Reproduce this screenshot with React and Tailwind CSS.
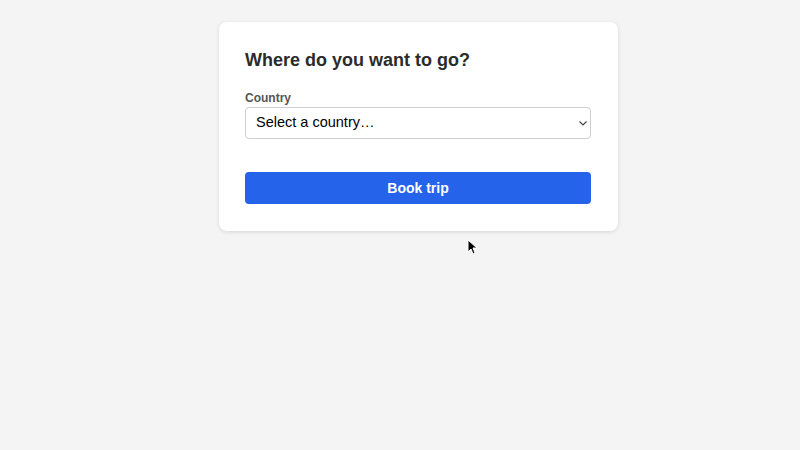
export default function App() {
  return (
    <div className="relative h-[450px] w-[800px] overflow-hidden bg-[#f4f4f4]" style={{ fontFamily: '"Liberation Sans", Arial, sans-serif' }}>
      <div className="ml-[219px] mt-[22px] w-[399px] rounded-lg bg-white pb-[27px] pl-[26px] pr-[27px] pt-[26px] shadow-[0_1px_4px_rgba(0,0,0,0.12)]">
        <h1 className="text-[18px] font-bold leading-[24px] text-[#2b2b2b]">Where do you want to go?</h1>

        <label className="mt-[19px] block text-[12px] font-semibold leading-[14px] text-[#555]">Country</label>
        <div className="relative mt-[2px] flex h-[32px] items-center rounded border border-[#cfcfcf] bg-white pl-[10px]">
          <span className="text-[14.5px] text-black">Select a country…</span>
          <svg className="absolute right-[3px] top-[13px]" width="8" height="5" viewBox="0 0 8 5">
            <polyline points="0.5,0.5 4,4 7.5,0.5" fill="none" stroke="#444" strokeWidth="1.2" />
          </svg>
        </div>

        <button className="mt-[33px] flex h-[32px] w-full items-center justify-center rounded bg-[#2563eb] text-[14px] font-bold text-white">
          Book trip
        </button>
      </div>

      {/* mouse cursor */}
      <svg className="absolute left-[467px] top-[239px]" width="10" height="16" viewBox="0 0 10 16">
        <path d="M1 1 L1 13 L4 10 L6 15 L8 14 L6 9 L10 9 Z" fill="#000" stroke="#fff" strokeWidth="1" />
      </svg>
    </div>
  );
}
